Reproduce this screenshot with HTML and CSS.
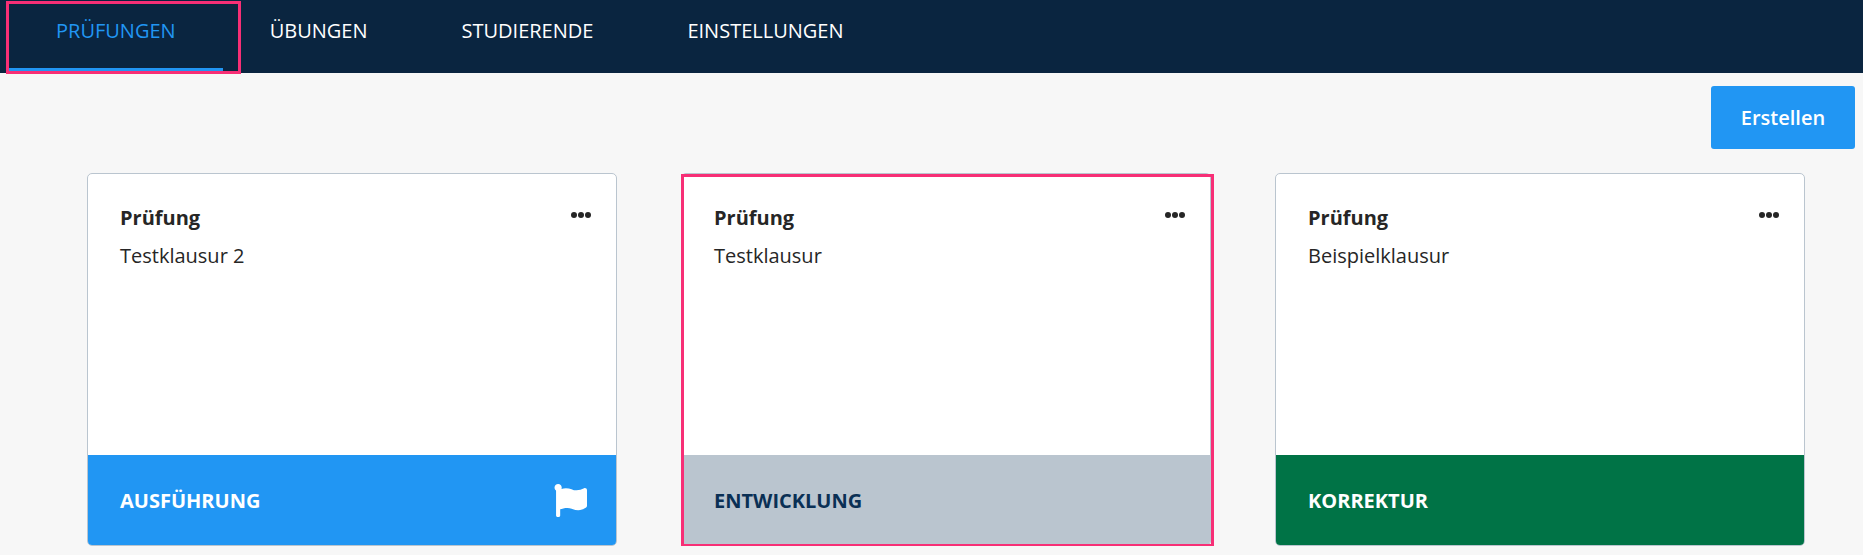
FILE: index.html
```html
<!DOCTYPE html>
<html lang="de">
<head>
    <meta charset="UTF-8">
    <title>Prüfungen</title>
    <link rel="stylesheet" href="styles.css">
</head>
<body>
<div class="nav">
    <a class="tab active">PRÜFUNGEN<span class="mark mark-tab"></span></a>
    <a class="tab">ÜBUNGEN</a>
    <a class="tab">STUDIERENDE</a>
    <a class="tab">EINSTELLUNGEN</a>
</div>

<div class="main">
    <div class="actions">
        <button class="btn">Erstellen</button>
    </div>

    <div class="cards">
        <div class="card">
            <div class="card-body">
                <div class="card-text">
                    <p class="label">Prüfung</p>
                    <p class="name">Testklausur 2</p>
                </div>
                <div class="dots"><i></i><i></i><i></i></div>
            </div>
            <div class="card-foot run">
                <span>AUSFÜHRUNG</span>
                <svg class="flag" viewBox="0 0 512 512"><path fill="#fff" d="M349.565 98.783C295.978 98.783 251.721 64 184.348 64c-24.955 0-47.309 4.384-68.045 12.013a55.947 55.947 0 0 0 3.586-23.562C118.117 24.015 94.806 1.206 66.338.048 34.345-1.254 8 24.296 8 56c0 19.026 9.497 35.825 24 45.945V488c0 13.255 10.745 24 24 24h16c13.255 0 24-10.745 24-24v-94.4c28.311-12.064 63.582-22.122 114.435-22.122 53.588 0 97.844 34.783 165.217 34.783 48.169 0 86.667-16.294 122.505-40.858C506.84 359.452 512 349.571 512 339.045v-243.1c0-23.393-24.269-38.87-45.485-29.016-34.338 15.948-76.454 31.854-116.95 31.854z"/></svg>
            </div>
        </div>

        <div class="card">
            <div class="card-body">
                <div class="card-text">
                    <p class="label">Prüfung</p>
                    <p class="name">Testklausur</p>
                </div>
                <div class="dots"><i></i><i></i><i></i></div>
            </div>
            <div class="card-foot dev">
                <span>ENTWICKLUNG</span>
            </div>
            <span class="mark mark-card"></span>
        </div>

        <div class="card">
            <div class="card-body">
                <div class="card-text">
                    <p class="label">Prüfung</p>
                    <p class="name">Beispielklausur</p>
                </div>
                <div class="dots"><i></i><i></i><i></i></div>
            </div>
            <div class="card-foot fix">
                <span>KORREKTUR</span>
            </div>
        </div>
    </div>
</div>
</body>
</html>
```

FILE: styles.css
```css
body{
    margin: 0;
    background-color: #f7f7f7;
    font-family: "Open Sans","Liberation Sans",sans-serif;
    color: #262626;
}
p{margin: 0;}

.nav{
    display: flex;
    height: 73px;
    padding-left: 9px;
    background-color: #0a2540;
}
.nav .tab{
    position: relative;
    box-sizing: border-box;
    height: 71px;
    padding: 17px 47px 0;
    font-size: 20px;
    line-height: 28px;
    color: #fff;
}
.nav .tab.active{
    color: #2196f3;
    border-bottom: 3px solid #2196f3;
}

.main{
    padding: 13px 8px 0 87px;
}
.actions{
    display: flex;
    justify-content: flex-end;
}
.btn{
    width: 144px;
    height: 63px;
    border: none;
    border-radius: 3px;
    background-color: #2196f3;
    font-family: inherit;
    font-size: 20px;
    font-weight: 600;
    color: #fff;
}

.cards{
    display: flex;
    gap: 64px;
    margin-top: 24px;
}
.card{
    position: relative;
    display: flex;
    flex-direction: column;
    box-sizing: border-box;
    width: 530px;
    height: 373px;
    border: 1px solid #bac5cf;
    border-radius: 5px;
    background-color: #fff;
}
.card-body{
    display: flex;
    flex: 1;
    justify-content: space-between;
    padding: 30px 25px 0 32px;
}
.label{
    font-size: 20px;
    font-weight: 700;
    line-height: 28px;
}
.name{
    margin-top: 10px;
    font-size: 20px;
    line-height: 28px;
}
.dots{
    display: flex;
    gap: 1px;
    margin-top: 8px;
}
.dots i{
    width: 6px;
    height: 6px;
    border-radius: 50%;
    background-color: #262626;
}
.card-foot{
    display: flex;
    align-items: center;
    justify-content: space-between;
    height: 90px;
    padding: 0 29px 0 32px;
    border-radius: 0 0 4px 4px;
    font-size: 20px;
    font-weight: 700;
}
.card-foot.run{
    background-color: #2196f3;
    color: #fff;
}
.card-foot.dev{
    background-color: #bac5cf;
    color: #0a3055;
}
.card-foot.fix{
    background-color: #007346;
    color: #fff;
}
.flag{
    width: 33px;
    height: 33px;
}

/* pink annotation frames */
.mark{
    position: absolute;
    box-sizing: border-box;
    border: 3px solid #f72f76;
    pointer-events: none;
}
.mark-tab{
    top: 1px;
    left: -3px;
    width: 235px;
    height: 73px;
}
.mark-card{
    top: 0;
    left: -1px;
    width: 533px;
    height: 373px;
}
```
